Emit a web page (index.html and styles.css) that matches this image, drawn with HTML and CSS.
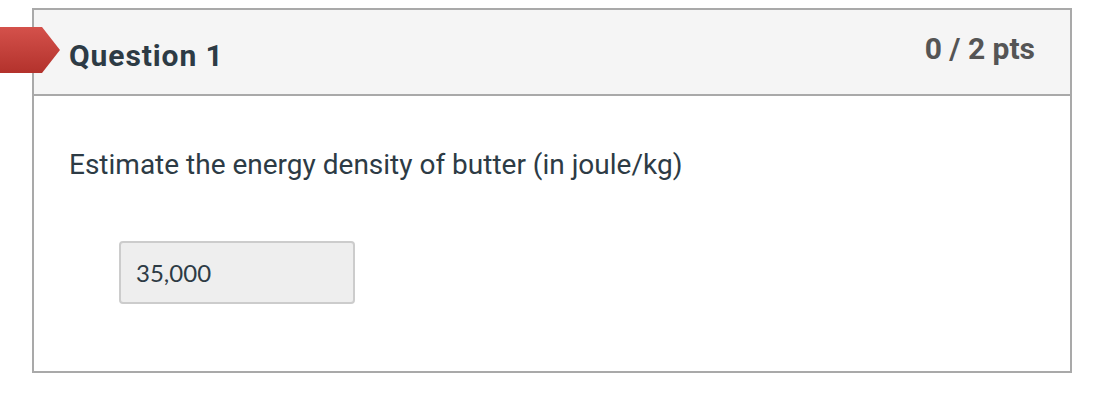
FILE: index.html
```html
<!DOCTYPE html>
<html>
<head>
<meta charset="utf-8">
<link rel="stylesheet" href="styles.css">
</head>
<body>
<div class="page">
  <div class="card">
    <div class="card-header">
      <div class="marker"></div>
      <h2 class="title">Question 1</h2>
      <div class="pts">0 / 2 pts</div>
    </div>
    <div class="card-body">
      <p class="question">Estimate the energy density of butter (in joule/kg)</p>
      <div class="answer">35,000</div>
    </div>
  </div>
</div>
</body>
</html>
```
FILE: styles.css
```css
html, body {
  margin: 0;
  padding: 0;
  background: #fff;
}
.page {
  padding: 8px 44px 0 32px;
}
.card {
  border: 2px solid #a9a9a9;
  background: #fff;
  height: 365px;
  box-sizing: border-box;
  position: relative;
}
.card-header {
  background: #f5f5f5;
  border-bottom: 2px solid #a9a9a9;
  height: 86px;
  box-sizing: border-box;
  display: flex;
  justify-content: space-between;
  align-items: flex-start;
  padding: 0 35px 0 35px;
  font-family: Roboto, "Liberation Sans", sans-serif;
}
.marker {
  position: absolute;
  left: -34px;
  top: 17px;
  width: 60px;
  height: 46px;
  background: linear-gradient(#d4514b, #b3322c);
  clip-path: polygon(0 0, 42px 0, 60px 50%, 42px 100%, 0 100%);
}
.title {
  margin: 0;
  padding-top: 29px;
  font-size: 30px;
  font-weight: 700;
  letter-spacing: 0.9px;
  color: #2d3b45;
  line-height: 34px;
}
.pts {
  padding-top: 22px;
  font-size: 30px;
  font-weight: 700;
  color: #555;
  line-height: 34px;
}
.card-body {
  padding: 0 35px;
}
.question {
  margin: 0;
  padding-top: 53px;
  font-family: Roboto, "Liberation Sans", sans-serif;
  font-size: 28px;
  line-height: 32px;
  color: #2d3b45;
}
.answer {
  margin: 60px 0 0 50px;
  width: 236px;
  height: 63px;
  box-sizing: border-box;
  background: #eee;
  border: 2px solid #ccc;
  border-radius: 4px;
  font-family: Lato, "Liberation Sans", sans-serif;
  font-size: 24px;
  color: #2d3b45;
  display: flex;
  align-items: center;
  padding-left: 15px;
}
```
